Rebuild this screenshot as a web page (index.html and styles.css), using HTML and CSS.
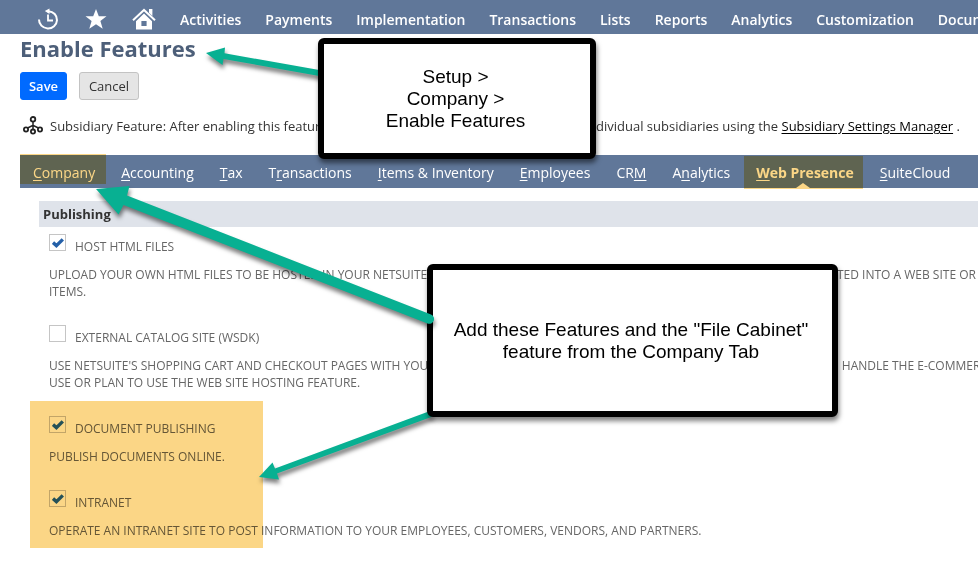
FILE: index.html
```html
<!DOCTYPE html>
<html lang="en">

<head>
    <meta charset="UTF-8">
    <meta name="viewport" content="width=device-width, initial-scale=1.0">
    <title>Enable Features</title>

    <link rel="stylesheet" href="styles.css">
</head>

<body>
    <nav class="topnav">
        <div class="icons">
            <svg class="recent" width="22" height="22" viewBox="0 0 22 22">
                <path d="M2 11.5A9 8.6 0 1 0 11.5 3.2H10" fill="none" stroke="#fff" stroke-width="2" />
                <path d="M7.8 3L12.5 .4V6Z" fill="#fff" />
                <path d="M11 6.5V12.5H16" fill="none" stroke="#fff" stroke-width="1.8" />
            </svg>
            <svg class="star" width="22" height="20" viewBox="0 0 22 20">
                <path d="M11 0L13.8 7.3H21.5L15.4 12.1L17.7 19.7L11 15.2L4.3 19.7L6.6 12.1L.5 7.3H8.2Z" fill="#fff" />
            </svg>
            <svg class="home" width="24" height="22" viewBox="0 0 24 22">
                <path d="M1 12.2L12 1.9L23 12.2" fill="none" stroke="#fff" stroke-width="2" />
                <path d="M17 1H20.4V8L17 4.8Z" fill="#fff" />
                <path d="M12 5.5L20 13.3V21.5H4V13.3ZM9.4 13V18H14.6V13Z" fill="#fff" fill-rule="evenodd" />
            </svg>
        </div>
        <div class="menu">
            <div>Activities</div>
            <div>Payments</div>
            <div>Implementation</div>
            <div>Transactions</div>
            <div>Lists</div>
            <div>Reports</div>
            <div>Analytics</div>
            <div>Customization</div>
            <div>Documents</div>
        </div>
    </nav>

    <h1>Enable Features</h1>

    <div class="buttons">
        <button class="save">Save</button>
        <button class="cancel">Cancel</button>
    </div>

    <div class="notice">
        <svg width="20" height="19" viewBox="0 0 20 19">
            <g fill="none" stroke="#222" stroke-width="1.8">
                <circle cx="10" cy="3.3" r="2.3" />
                <circle cx="3" cy="13.5" r="2.1" />
                <circle cx="10" cy="15.6" r="2.1" />
                <circle cx="17" cy="13.5" r="2.1" />
                <path d="M10 5.5V13.4M4.6 12L10 9.4L15.4 12" stroke-width="1.5" />
            </g>
        </svg>
        <span class="noticeLeft">Subsidiary Feature: After enabling this feature</span>
        <span>dividual subsidiaries using the <a href="#">Subsidiary Settings Manager</a> .</span>
    </div>

    <div class="tabs">
        <div class="tab"><u>C</u>ompany</div>
        <div class="tab"><u>A</u>ccounting</div>
        <div class="tab"><u>T</u>ax</div>
        <div class="tab">T<u>r</u>ansactions</div>
        <div class="tab"><u>I</u>tems &amp; Inventory</div>
        <div class="tab"><u>E</u>mployees</div>
        <div class="tab">CR<u>M</u></div>
        <div class="tab">A<u>n</u>alytics</div>
        <div class="tab active"><u>W</u>eb Presence</div>
        <div class="tab"><u>S</u>uiteCloud</div>
    </div>

    <div class="content">
        <h2>Publishing</h2>

        <div class="feature">
            <div class="check"><span class="box"><svg width="12" height="10" viewBox="0 0 12 10"><path d="M1 4.6L4.4 7.6L10.8 1.4" /></svg></span>HOST HTML FILES</div>
            <div class="text">
                <div class="row"><span class="rowLeft">UPLOAD YOUR OWN HTML FILES TO BE HOSTED IN YOUR NETSUITE</span><span class="hosted">TED INTO A WEB SITE OR</span></div>
                <div>ITEMS.</div>
            </div>
        </div>

        <div class="feature">
            <div class="check"><span class="box"></span>EXTERNAL CATALOG SITE (WSDK)</div>
            <div class="text">
                <div class="row"><span class="rowLeft">USE NETSUITE'S SHOPPING CART AND CHECKOUT PAGES WITH YOUR</span><span class="handle">E HANDLE THE E-COMMERCE</span></div>
                <div>USE OR PLAN TO USE THE WEB SITE HOSTING FEATURE.</div>
            </div>
        </div>

        <div class="feature short">
            <div class="check"><span class="box"><svg width="12" height="10" viewBox="0 0 12 10"><path d="M1 4.6L4.4 7.6L10.8 1.4" /></svg></span>DOCUMENT PUBLISHING</div>
            <div class="text">PUBLISH DOCUMENTS ONLINE.</div>
        </div>

        <div class="feature">
            <div class="check"><span class="box"><svg width="12" height="10" viewBox="0 0 12 10"><path d="M1 4.6L4.4 7.6L10.8 1.4" /></svg></span>INTRANET</div>
            <div class="text">OPERATE AN INTRANET SITE TO POST INFORMATION TO YOUR EMPLOYEES, CUSTOMERS, VENDORS, AND PARTNERS.</div>
        </div>
    </div>

    <!-- highlighter marks -->
    <div class="mark markCompany"></div>
    <div class="mark markWeb"></div>
    <div class="mark markFeatures"></div>

    <!-- arrows that start under the callouts -->
    <svg class="arrows" width="978" height="565" viewBox="0 0 978 565">
        <g fill="#08b092">
            <path d="M206 53L225 47.5L224.5 53.3L322 70.5V76.5L223.5 59L222.5 65Z" />
            <path d="M259 477L272.5 462.5L275 468.5L430 411L434 416L277 473.5L279 479.5Z" />
        </g>
    </svg>

    <div class="callout path">
        <div>Setup &gt;</div>
        <div>Company &gt;</div>
        <div>Enable Features</div>
    </div>
    <div class="callout note">
        <div>Add these Features and the "File Cabinet"</div>
        <div>feature from the Company Tab</div>
    </div>

    <svg class="arrows" width="978" height="565" viewBox="0 0 978 565">
        <path d="M96 189L129.5 186L127 195.5L431 314.5A4.8 4.8 0 0 1 427.5 323.5L123.5 205L118.5 214.5Z" fill="#08b092" />
    </svg>
</body>

</html>
```

FILE: styles.css
```css
body {
    position: relative;
    width: 978px;
    height: 565px;
    margin: 0;
    overflow: hidden;
    background-color: #fff;
    font-family: "Open Sans", sans-serif;
    font-size: 13px;
    color: #333;
    white-space: nowrap;
}

.topnav {
    display: flex;
    height: 34px;
    background-color: #607799;
    color: #fff;
}

.icons {
    display: flex;
    width: 180px;
    flex-shrink: 0;
}

.recent {
    margin: 8px 0 0 37px;
}

.star {
    margin: 9px 0 0 26px;
}

.home {
    margin: 8px 0 0 25px;
}

.menu {
    display: flex;
    gap: 24px;
    font-size: 14px;
    font-weight: 600;
    line-height: 40px;
}

h1 {
    margin: 0 0 0 20px;
    font-size: 22px;
    line-height: 28px;
    color: #4d5f79;
}

.buttons {
    display: flex;
    gap: 12px;
    margin: 10px 0 0 20px;
}

.buttons button {
    box-sizing: border-box;
    height: 28px;
    padding: 0;
    border-radius: 3px;
    font-family: inherit;
    font-size: 13px;
    font-weight: 600;
}

.buttons .save {
    width: 47px;
    border: 1px solid #006aff;
    background-color: #006aff;
    color: #fff;
}

.buttons .cancel {
    width: 60px;
    border: 1px solid #c3c3c3;
    background-color: #e5e5e5;
    color: #333;
    font-weight: 500;
}

.notice {
    display: flex;
    height: 20px;
    margin: 16px 0 0 23px;
    line-height: 20px;
}

.noticeLeft {
    width: 546px;
    margin-left: 7px;
}

.notice a {
    color: #000;
    text-underline-offset: 2px;
}

.tabs {
    display: flex;
    height: 33px;
    margin: 19px 0 0 20px;
    background-color: #607799;
    color: #fff;
    font-size: 14px;
    line-height: 36px;
}

.tab {
    padding: 0 13px;
}

.tab u {
    text-underline-offset: 2px;
}

.active {
    position: relative;
    font-weight: bold;
}

.active::after {
    content: "";
    position: absolute;
    left: 53px;
    bottom: 0;
    border: 7px solid transparent;
    border-top: 0;
    border-bottom: 5px solid #fff;
}

.content {
    margin: 13px 0 0 39px;
    font-size: 12px;
    color: #666;
}

h2 {
    height: 26px;
    margin: 0;
    padding-left: 4px;
    background-color: #dfe3ea;
    font-size: 13px;
    line-height: 27px;
    color: #333;
}

.feature {
    height: 91px;
    padding-left: 10px;
}

.short {
    height: 74px;
}

.check {
    display: flex;
    height: 39px;
    line-height: 40px;
}

.box {
    box-sizing: border-box;
    width: 17px;
    height: 17px;
    margin: 7px 9px 0 0;
    padding: 3px 2px;
    border: 1px solid #c5c5c5;
    background-color: #fff;
    line-height: 0;
}

.box path {
    fill: none;
    stroke: #2460a8;
    stroke-width: 3.4;
}

.text {
    line-height: 17px;
}

.row {
    display: flex;
}

.rowLeft {
    width: 788px;
    flex-shrink: 0;
}

.handle {
    margin-left: -5px;
}

.mark {
    position: absolute;
    background-color: #fbd686;
    mix-blend-mode: multiply;
}

.markCompany {
    left: 20px;
    top: 154px;
    width: 86px;
    height: 30px;
}

.markWeb {
    left: 744px;
    top: 156px;
    width: 119px;
    height: 33px;
}

.markFeatures {
    left: 30px;
    top: 401px;
    width: 233px;
    height: 147px;
}

.arrows {
    position: absolute;
    left: 0;
    top: 0;
    filter: drop-shadow(1px 4px 2px rgba(0, 0, 0, 0.5));
}

.callout {
    position: absolute;
    box-sizing: border-box;
    display: flex;
    flex-direction: column;
    justify-content: center;
    border: 6px solid #000;
    border-radius: 6px;
    background-color: #fff;
    box-shadow: 1px 4px 5px rgba(0, 0, 0, 0.5);
    color: #000;
    font-family: "Liberation Sans", Arial, sans-serif;
    font-size: 19px;
    line-height: 22px;
    text-align: center;
}

.path {
    left: 318px;
    top: 38px;
    width: 278px;
    height: 121px;
    padding-right: 3px;
}

.note {
    left: 427px;
    top: 264px;
    width: 411px;
    height: 153px;
    padding-right: 3px;
}
```
